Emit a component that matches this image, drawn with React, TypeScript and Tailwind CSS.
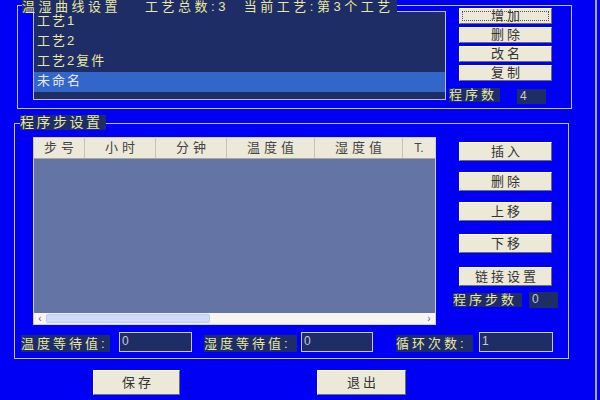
import React from 'react';

const face = "flex items-center justify-center border border-t-white border-l-white border-r-[#716f64] border-b-[#716f64] bg-[#ece9d8] text-[13px] tracking-[3px] text-[#333]";

function WinButton({ label, focus, className }: { label: string; focus?: boolean; className: string }) {
    return (
        <div className={`relative ${face} ${className}`}>
            {focus ? <span className="absolute inset-[2px] border border-dotted border-[#555]" /> : null}
            <span className="pl-[3px]">{label}</span>
        </div>
    );
}

const processes = ['工艺1', '工艺2', '工艺2复件', '未命名'];

const columns = [
    { name: '步号', w: 'w-[51px]' },
    { name: '小时', w: 'w-[71px]' },
    { name: '分钟', w: 'w-[71px]' },
    { name: '温度值', w: 'w-[88px]' },
    { name: '湿度值', w: 'w-[88px]' },
];

export default function App() {
    return (
        <div className="h-[400px] w-[600px] overflow-hidden bg-[#0000f4] font-['Liberation_Sans','Noto_Sans_CJK_SC',sans-serif]">
            <div className="h-full w-[597px] border-r-2 border-r-[#a8a8bc] pt-[5px]">
                {/* process curve group */}
                <div className="relative ml-[17px] h-[104px] w-[555px] border border-[#c4c4e6]">
                    <div className="absolute left-[4px] top-[-6px] flex h-[13px] w-[375px] items-center whitespace-nowrap bg-[#1f2d66] text-[13px] leading-[13px] tracking-[3.5px] text-[#e8e8a0]">
                        <span>温湿曲线设置</span>
                        <span className="ml-[24px]">工艺总数:3</span>
                        <span className="ml-[15px]">当前工艺:第3个工艺</span>
                    </div>
                    <div className="flex">
                        <div className="ml-[15px] mt-[5px] h-[89px] w-[413px] border border-[#bcbcdc] bg-[#1f2d66]">
                            {processes.map((p, i) => (
                                <div
                                    key={p}
                                    className={i === 3
                                        ? "h-[20px] bg-[#3266c8] px-[3px] text-[13px] leading-[18px] tracking-[2px] text-[#e8e8f8]"
                                        : "h-[20px] px-[3px] text-[13px] leading-[18px] tracking-[2px] text-[#e8e8a0]"}
                                >
                                    {p}
                                </div>
                            ))}
                        </div>
                        <div className="ml-[3px] flex flex-col">
                            <WinButton label="增加" focus className="ml-[10px] mt-[2px] h-[16px] w-[93px]" />
                            <WinButton label="删除" className="ml-[10px] mt-[3px] h-[16px] w-[93px]" />
                            <WinButton label="改名" className="ml-[10px] mt-[3px] h-[16px] w-[93px]" />
                            <WinButton label="复制" className="ml-[10px] mt-[3px] h-[16px] w-[93px]" />
                            <div className="mt-[7px] flex items-start">
                                <div className="h-[14px] w-[51px] bg-[#1f2d66] text-[13px] leading-[14px] tracking-[3px] text-[#e8e8a0]">程序数</div>
                                <div className="ml-[17px] mt-[1px] h-[15px] w-[29px] bg-[#1f2d66] pl-[3px] text-[12px] leading-[15px] text-[#c8c8d8]">4</div>
                            </div>
                        </div>
                    </div>
                </div>

                {/* program step group */}
                <div className="relative ml-[14px] mt-[14px] h-[236px] w-[555px] border border-[#c4c4e6]">
                    <div className="absolute left-[5px] top-[-9px] h-[15px] w-[86px] whitespace-nowrap bg-[#1f2d66] text-[14px] leading-[15px] tracking-[2.5px] text-[#e8e8a0]">
                        程序步设置
                    </div>
                    <div className="flex items-start">
                        <div className="ml-[18px] mt-[13px] flex h-[188px] w-[403px] flex-col overflow-hidden border border-[#d4d0c8]">
                            <div className="flex h-[21px] shrink-0 border-b border-b-[#aca899] bg-[#ece9d8]">
                                {columns.map((c) => (
                                    <div key={c.name} className={`${c.w} flex shrink-0 items-center justify-center border-r border-r-[#c7c5b2] pl-[4px] text-[13px] tracking-[4px] text-[#444]`}>
                                        {c.name}
                                    </div>
                                ))}
                                <div className="flex flex-1 items-center justify-center overflow-hidden text-[12px] text-[#444]">T.</div>
                            </div>
                            <div className="flex-1 bg-[#6474a4]" />
                            <div className="flex h-[11px] shrink-0 items-center bg-[#f6f5f0]">
                                <div className="flex h-full w-[12px] items-center justify-center text-[10px] leading-none text-[#4d61a8]">‹</div>
                                <div className="h-[9px] w-[164px] rounded-[2px] border border-[#b9cbf3] bg-[#d0dcf8]" />
                                <div className="flex-1" />
                                <div className="flex h-full w-[12px] items-center justify-center text-[10px] leading-none text-[#4d61a8]">›</div>
                            </div>
                        </div>
                        <div className="ml-[17px] flex w-[105px] flex-col">
                            <WinButton label="插入" className="ml-[6px] mt-[18px] h-[19px] w-[93px]" />
                            <WinButton label="删除" className="ml-[6px] mt-[11px] h-[19px] w-[93px]" />
                            <WinButton label="上移" className="ml-[6px] mt-[11px] h-[19px] w-[93px]" />
                            <WinButton label="下移" className="ml-[6px] mt-[13px] h-[19px] w-[93px]" />
                            <WinButton label="链接设置" className="ml-[6px] mt-[14px] h-[19px] w-[93px]" />
                            <div className="mt-[6px] flex items-start">
                                <div className="mt-[1px] h-[14px] w-[69px] bg-[#1f2d66] text-[13px] leading-[14px] tracking-[3px] text-[#e8e8a0]">程序步数</div>
                                <div className="ml-[7px] h-[16px] w-[29px] bg-[#1f2d66] pl-[3px] text-[12px] leading-[14px] text-[#c8c8d8]">0</div>
                            </div>
                        </div>
                    </div>
                    <div className="mt-[7px] flex h-[20px] items-center">
                        <div className="ml-[6px] mt-[3px] h-[17px] w-[89px] bg-[#1f2d66] text-[13px] leading-[17px] tracking-[3px] text-[#e8e8a0]">温度等待值:</div>
                        <div className="ml-[9px] h-[20px] w-[73px] border border-[#c8c8dc] bg-[#1f2d66] pl-[2px] text-[12px] leading-[16px] text-[#c8c8d8]">0</div>
                        <div className="ml-[12px] mt-[3px] h-[17px] w-[93px] bg-[#1f2d66] text-[13px] leading-[17px] tracking-[3px] text-[#e8e8a0]">湿度等待值:</div>
                        <div className="ml-[4px] h-[20px] w-[72px] border border-[#c8c8dc] bg-[#1f2d66] pl-[2px] text-[12px] leading-[16px] text-[#c8c8d8]">0</div>
                        <div className="ml-[23px] mt-[3px] h-[17px] w-[77px] bg-[#1f2d66] text-[13px] leading-[17px] tracking-[3px] text-[#e8e8a0]">循环次数:</div>
                        <div className="ml-[6px] h-[20px] w-[74px] border border-[#c8c8dc] bg-[#1f2d66] pl-[2px] text-[12px] leading-[16px] text-[#c8c8d8]">1</div>
                    </div>
                </div>

                <div className="mt-[11px] flex">
                    <WinButton label="保存" className="ml-[93px] h-[25px] w-[87px]" />
                    <WinButton label="退出" className="ml-[137px] h-[25px] w-[89px]" />
                </div>
            </div>
        </div>
    );
}
